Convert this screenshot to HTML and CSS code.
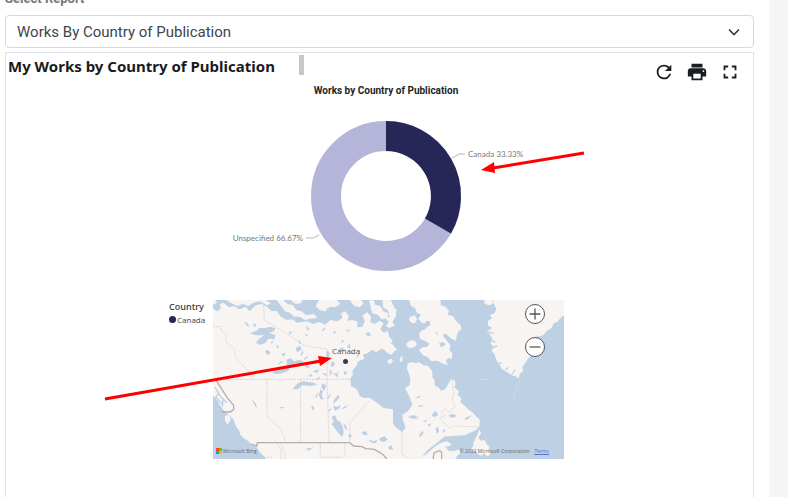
FILE: index.html
```html
<!DOCTYPE html>
<html lang="en">
<head>
<meta charset="utf-8">
<meta name="viewport" content="width=device-width, initial-scale=1">
<title>My Works by Country of Publication</title>
<link rel="stylesheet" href="styles.css">
</head>
<body>
<main class="page">
  <label class="field-label" for="report">Select Report</label>
  <div class="select-wrap">
    <select class="select" id="report"><option>Works By Country of Publication</option></select>
    <svg class="chevron" viewBox="0 0 12 8" aria-hidden="true"><path d="M1 1.5 6 6.5 11 1.5"/></svg>
  </div>
  <section class="panel">
    <header class="panel-head">
      <h1 class="title">My Works by Country of Publication</h1>
      <span class="thumb"></span>
      <div class="tools">
        <button class="tool" type="button" aria-label="Refresh"><svg viewBox="0 0 24 24"><path d="M17.65 6.35A7.96 7.96 0 0 0 12 4a8 8 0 1 0 7.73 10h-2.08A6 6 0 1 1 12 6c1.66 0 3.14.69 4.22 1.78L13 11h7V4z"/></svg></button>
        <button class="tool" type="button" aria-label="Print"><svg viewBox="0 0 24 24"><path d="M19 8H5c-1.66 0-3 1.34-3 3v6h4v4h12v-4h4v-6c0-1.66-1.34-3-3-3zm-3 11H8v-5h8v5zm3-7a1 1 0 1 1 0-2 1 1 0 0 1 0 2zM18 3H6v4h12z"/></svg></button>
        <button class="tool" type="button" aria-label="Full screen"><svg viewBox="0 0 24 24"><path d="M7 14H5v5h5v-2H7zM5 10h2V7h3V5H5zm12 7h-3v2h5v-5h-2zM14 5v2h3v3h2V5z"/></svg></button>
      </div>
    </header>
    <div class="report">
      <figure class="donut">
        <figcaption class="chart-title">Works by Country of Publication</figcaption>
        <svg class="donut-plot" viewBox="0 0 351 201" role="img" aria-label="Canada 33.33%, Unspecified 66.67%">
          <circle class="ring-rest" cx="173" cy="97" r="60"/>
          <path class="ring-canada" d="M173 37A60 60 0 0 1 224.96 127"/>
          <path class="leader" d="M239 59 246 55H252M106 136 100 139H93"/>
          <text class="slice-label" x="255" y="58">Canada 33.33%</text>
          <text class="slice-label end" x="90" y="142">Unspecified 66.67%</text>
        </svg>
      </figure>
      <div class="legend">
        <strong class="legend-title">Country</strong>
        <span class="legend-item"><i class="dot"></i>Canada</span>
      </div>
      <div class="map">
        <svg class="map-plot" viewBox="0 0 1053 477" role="img" aria-label="Map of Canada">
          <g class="land">
            <path d="M0 26 12 34 24 25 20 12 32 8 48 22 62 18 80 28 98 20 110 34 128 16 146 12 162 20 176 34 190 32 205 52 222 60 238 58 252 68 282 64 300 72 318 66 336 74 352 60 374 64 388 54 384 40 396 34 408 48 402 62 420 60 434 66 432 82 448 80 456 62 448 48 462 36 474 50 472 66 486 72 498 62 512 70 502 88 512 98 524 92 530 112 540 124 528 132 536 144 522 152 506 146 490 156 476 150 466 158 450 164 454 176 436 184 428 200 418 212 420 224 412 236 414 258 432 268 440 288 454 294 470 293 492 308 512 324 540 328 540 368 546 380 556 388 563 392 568 400 570 390 577 388 576 376 570 362 568 344 586 332 598 314 592 296 584 280 576 265 590 255 592 240 588 222 582 206 584 190 596 186 608 190 618 186 632 196 646 198 658 214 658 232 664 238 666 258 676 262 684 272 696 268 706 252 714 238 724 240 728 252 724 262 738 274 734 284 746 296 742 306 756 318 768 330 780 338 790 350 800 358 800 378 790 390 776 396 754 406 716 408 694 410 672 428 656 440 640 454 628 470 640 462 656 448 674 434 690 426 702 424 716 432 706 440 696 438 706 452 722 454 740 448 742 460 732 468 728 477H160L142 458 130 442 116 432 104 422 92 414 84 398 70 382 62 360 48 344 36 336 24 320 14 304 0 286Z"/>
            <path d="M0 0H8L12 8 0 14ZM38 0H158L174 10 162 16 140 4 122 8 106 18 90 12 74 18 56 10ZM190 0H210L224 12 240 16 250 30 266 34 280 46 302 42 314 54 292 56 276 60 260 50 244 50 230 38 216 34 206 20ZM232 0H268L264 10 248 12ZM318 0H372L382 12 366 22 350 20 338 34 320 30 308 18ZM410 0H444L452 10 440 22 424 18ZM468 2 482 0 486 14 502 18 510 34 526 40 524 54 506 58 494 44 478 40ZM508 0H534L540 14 550 28 548 50 538 66 546 76 530 84 518 78 528 66 518 56 530 50 524 30 510 22Z"/>
            <path d="M516 124 528 126 540 134 552 150 544 154 536 164 524 160 514 150 506 138ZM524 180 534 176 540 182 532 192 524 190ZM562 172 568 168 568 184 560 186ZM592 50 606 46 612 58 606 70 594 68 588 58ZM582 128 594 120 606 124 612 132 604 142 588 144 580 138Z"/>
            <path d="M588 0H682L684 16 698 20 708 34 704 44 720 48 728 62 742 74 746 88 736 94 732 106 728 122 716 116 706 108 696 100 690 108 702 122 712 136 710 150 718 160 716 178 706 174 698 182 706 196 688 190 672 182 656 184 642 170 630 166 618 150 628 142 642 140 650 132 636 122 622 118 618 104 624 92 636 88 648 76 640 68 628 70 616 56 624 44 612 38 606 24 594 18Z"/>
            <path d="M814 0 836 0 840 12 826 16 814 10ZM838 0H1053V46L1040 56 1034 66 1022 70 1016 84 1000 94 992 104 978 110 970 106 976 120 962 138 950 148 946 160 954 168 944 176 938 188 928 200 930 214 920 222 918 236 910 230 898 226 888 220 878 214 866 206 860 194 850 180 844 162 836 152 842 140 832 130 838 116 830 102 822 94 834 86 824 74 826 62 838 54 830 46 844 40 850 28 844 14Z"/>
            <path d="M800 388 804 400 796 414 804 422 816 420 820 432 830 440 826 450 834 460 824 470 812 460 804 468 792 460 786 452 774 450 780 438 782 426 790 410ZM690 458 702 456 714 464 706 472 690 468Z"/>
            <path d="M2 266 14 276 18 290 28 292 38 308 50 308 58 320 54 334 40 336 28 318 18 306 8 292ZM36 348 48 344 54 358 44 374 36 362ZM78 390 96 404 106 420 94 416 82 404Z"/>
          </g>
          <g class="water">
            <path d="M110 100 132 92 138 84 158 84 170 80 188 84 182 94 168 98 188 106 184 118 166 116 156 130 142 134 128 128 138 116 154 106 130 106ZM94 66 102 68 110 80 102 78ZM120 70 132 74 124 82ZM176 218 192 206 214 204 222 194 220 180 232 174 244 184 258 180 272 184 268 196 248 202 238 194 226 212 208 220 190 222ZM252 252 268 244 302 248 314 254 290 258 268 256 254 268 240 268 244 260ZM326 250 340 256 334 272 326 264ZM322 268 330 274 326 286 332 300 322 296 318 284ZM356 350 366 346 372 360 382 366 390 382 392 400 386 410 376 398 366 386 356 372 362 366ZM390 370 398 376 404 390 396 386ZM364 298 376 284 380 292 370 304 360 312ZM360 318 374 320 384 314 378 326 366 332ZM116 298 128 310 132 326 124 314ZM200 320 216 322 206 326ZM278 446 302 442 286 452ZM294 320 302 318 304 332 298 328Z"/>
            <path d="M156 152 166 150 172 160 162 166ZM188 134 198 140 194 146ZM228 94 238 96 230 104ZM256 120 264 126 260 134ZM248 144 262 138 266 150 252 156ZM204 162 218 158 212 170ZM280 78 290 86 282 92ZM272 200 286 194 290 204ZM300 184 314 178 306 192ZM300 214 318 208 312 220ZM286 226 298 222 294 232ZM342 150 350 158 346 180 340 168ZM358 184 366 188 362 200 352 198ZM366 228 376 214 374 232ZM376 150 386 142 396 148 384 156ZM402 142 410 130 412 146ZM350 208 358 216 350 228ZM326 182 338 180 332 194ZM392 216 398 212 402 222 394 224ZM458 100 468 96 474 106 464 110ZM360 92 370 96 364 102ZM386 120 394 122 386 130ZM446 396 460 394 464 406 450 404ZM408 402 416 404 414 414 406 410ZM498 416 514 408 524 418 514 426 502 424ZM526 440 536 436 540 450 528 448ZM464 418 480 424 492 420 490 430 476 428Z"/>
            <path d="M604 294 624 286 618 294ZM614 318 632 314 622 322ZM584 352 598 346 618 348 606 352 620 356 600 356ZM618 404 630 392 632 398 622 412ZM656 344 668 332 676 344 668 350 660 350ZM668 384 676 382 678 396 670 400ZM706 346 720 342 732 348 716 354ZM756 354 776 346 766 356 756 360ZM690 388 698 392 690 398ZM630 364 644 358 638 366ZM644 374 654 370 650 380ZM638 64 650 62 652 78 640 74ZM690 126 698 134 684 142 678 130ZM668 96 674 98 672 108ZM340 24 354 30 342 36ZM542 8 552 20 544 26Z"/>
          </g>
          <path class="lakes" d="M6 262 24 292 42 308M16 282 8 292 28 312M30 300 28 320M174 130 180 124M208 184 196 192M284 170 274 178M270 154 264 166M316 280 308 292M346 334 354 326M388 326 402 318M360 220 368 224M352 284 344 296M410 158 422 160M432 172 440 158M330 220 342 226M310 238 320 232M336 84 328 92M400 90 410 94M276 102 284 108M822 78 836 84M826 96 842 100M834 122 846 126M840 142 852 138M858 192 866 188M878 210 884 202M898 222 906 210"/>
          <path class="border" d="M0 80H22L28 96 40 106 38 124 62 144 70 176 96 202 122 238M152 16 154 60 220 100 272 136 342 148V238M0 238H412M162 238V352L204 386 218 426M263 238V426M342 238 348 426M468 302 410 370V426M132 428 134 472M192 430 204 448V477M202 430 216 460V477M322 430V472H390M396 430 396 470M0 472H180M567 394V462L588 477M718 240 722 278 718 300 726 320 710 338 698 328 684 336 696 348 682 352 690 366 700 376 714 386 722 378 796 381"/>
          <path class="frontier" d="M10 242 42 292 62 316 62 328 52 336H26M116 432 130 438 134 428H410L422 438 448 440 458 446 484 448 508 462 522 477M660 477 664 458 680 452 686 457V477"/>
          <path class="ice" d="M794 238H826M922 238 908 274 900 298"/>
        </svg>
        <span class="place">Canada</span>
        <span class="bubble"></span>
        <div class="zoom">
          <button class="zoom-btn" type="button" aria-label="Zoom in"><svg viewBox="0 0 20 20"><path d="M4 10H16M10 4V16"/></svg></button>
          <button class="zoom-btn" type="button" aria-label="Zoom out"><svg viewBox="0 0 20 20"><path d="M4 10H16"/></svg></button>
        </div>
        <div class="credits">
          <svg class="ms" viewBox="0 0 6 6" aria-hidden="true"><path fill="#f25022" d="M0 0h3v3H0z"/><path fill="#7fba00" d="M3 0h3v3H3z"/><path fill="#00a4ef" d="M0 3h3v3H0z"/><path fill="#ffb900" d="M3 3h3v3H3z"/></svg>
          <span>Microsoft Bing</span>
          <span class="copyright">© 2022 Microsoft Corporation</span>
          <a class="terms" href="#">Terms</a>
        </div>
      </div>
      <svg class="arrows" viewBox="0 0 395 380" aria-hidden="true">
        <path class="shaft" d="M415 72 324 87M-64 318 152 280"/>
        <path class="head" d="M312 89 325 81 326 92ZM163 277 149 275 151 285Z"/>
      </svg>
    </div>
  </section>
</main>
</body>
</html>
```

FILE: styles.css
```css
* { box-sizing: border-box; }
body {
  margin: 0;
  background: #f5f5f6;
  font-family: Roboto, "Liberation Sans", sans-serif;
  color: #212529;
}
.page {
  display: flex;
  flex-direction: column;
  height: 100vh;
  overflow: hidden;
  margin-right: 19px;
  padding: 0 15px 0 5px;
  background: #fff;
}
.field-label {
  flex: none;
  margin-top: -9px;
  height: 24px;
  font-size: 13px;
  line-height: 16px;
  font-weight: 700;
  color: #777;
}
.select-wrap { position: relative; flex: none; }
.select {
  display: block;
  width: 100%;
  height: 33px;
  padding: 0 36px 0 11px;
  border: 1px solid #d3d9df;
  border-radius: 4px;
  background: #fff;
  appearance: none;
  font: 15px/24px Roboto, sans-serif;
  color: #40464c;
}
.chevron {
  position: absolute;
  right: 14px;
  top: 13px;
  width: 12px;
  height: 8px;
  fill: none;
  stroke: #343a40;
  stroke-width: 1.6;
  pointer-events: none;
}
.panel {
  flex: 1;
  margin-top: 4px;
  border: 1px solid #dfe3e8;
  border-bottom: 0;
}
.panel-head { display: flex; height: 28px; padding: 2px 12px 0 2px; }
.title {
  margin: 0;
  font: 700 15px/22px "Noto Sans", "Open Sans", sans-serif;
  color: #1b1b1b;
}
.thumb { width: 5px; height: 20px; margin-left: 24px; background: #c8c8c8; }
.tools { display: flex; gap: 11px; margin: 5px 0 0 auto; }
.tool {
  width: 22px;
  height: 24px;
  padding: 0;
  border: 0;
  background: none;
}
.tool svg { display: block; width: 22px; height: 24px; fill: #1b1e21; overflow: visible; }
.report {
  position: relative;
  display: grid;
  grid-template-columns: 44px 351px;
  width: 395px;
  margin: 0 auto;
  left: -13px;
}
.donut { grid-column: 2; margin: 0; padding-top: 2px; }
.chart-title {
  padding-right: 5px;
  font-size: 10px;
  line-height: 16px;
  font-weight: 700;
  text-align: center;
}
.donut-plot { display: block; width: 351px; height: 201px; }
.ring-rest, .ring-canada { fill: none; stroke-width: 30; }
.ring-rest { stroke: #b5b5d9; }
.ring-canada { stroke: #262756; }
.leader { fill: none; stroke: #b5b5b5; }
.slice-label { font: 8px Lato, sans-serif; fill: #777; }
.end { text-anchor: end; }
.legend { font-family: "Open Sans", sans-serif; color: #444; }
.legend-title { display: block; font-size: 9px; line-height: 13px; font-weight: 600; }
.legend-item { display: flex; align-items: center; gap: 1px; font-size: 8px; line-height: 13px; }
.dot { flex: none; width: 7px; height: 7px; border-radius: 50%; background: #262756; }
.map {
  position: relative;
  height: 159px;
  overflow: hidden;
  background: #bdd0e4;
  font-family: "Open Sans", sans-serif;
}
.map-plot { display: block; width: 351px; height: 159px; }
.land { fill: #f7f4f2; }
.water { fill: #bdd0e4; }
.lakes { fill: none; stroke: #bdd0e4; stroke-width: 4; }
.border { fill: none; stroke: #ccc8c5; stroke-width: 2; stroke-dasharray: 6 3; }
.frontier { fill: none; stroke: #b3afad; stroke-width: 4; }
.ice { fill: none; stroke: #d5e0ea; stroke-width: 2; }
.place { position: absolute; left: 119px; top: 45px; font-size: 8px; line-height: 12px; color: #555; }
.bubble {
  position: absolute;
  left: 130px;
  top: 59px;
  width: 5px;
  height: 5px;
  border-radius: 50%;
  background: #37385f;
}
.zoom { position: absolute; right: 19px; top: 4px; display: grid; gap: 13px; }
.zoom-btn {
  width: 20px;
  height: 20px;
  padding: 0;
  border: 1px solid #555;
  border-radius: 50%;
  background: #fff;
}
.zoom-btn svg { display: block; width: 18px; height: 18px; fill: none; stroke: #555; stroke-width: 1.4; }
.credits {
  position: absolute;
  left: 3px;
  right: 15px;
  bottom: 4px;
  display: flex;
  align-items: center;
  gap: 1px;
  font-size: 5px;
  line-height: 8px;
  color: #666;
}
.ms { width: 6px; height: 6px; }
.copyright { margin-left: auto; }
.terms { margin-left: 4px; color: #5274c7; }
.arrows {
  position: absolute;
  left: 0;
  top: 0;
  width: 395px;
  height: 380px;
  overflow: visible;
  pointer-events: none;
}
.shaft { fill: none; stroke: #f00; stroke-width: 3; }
.head { fill: #f00; }
```
